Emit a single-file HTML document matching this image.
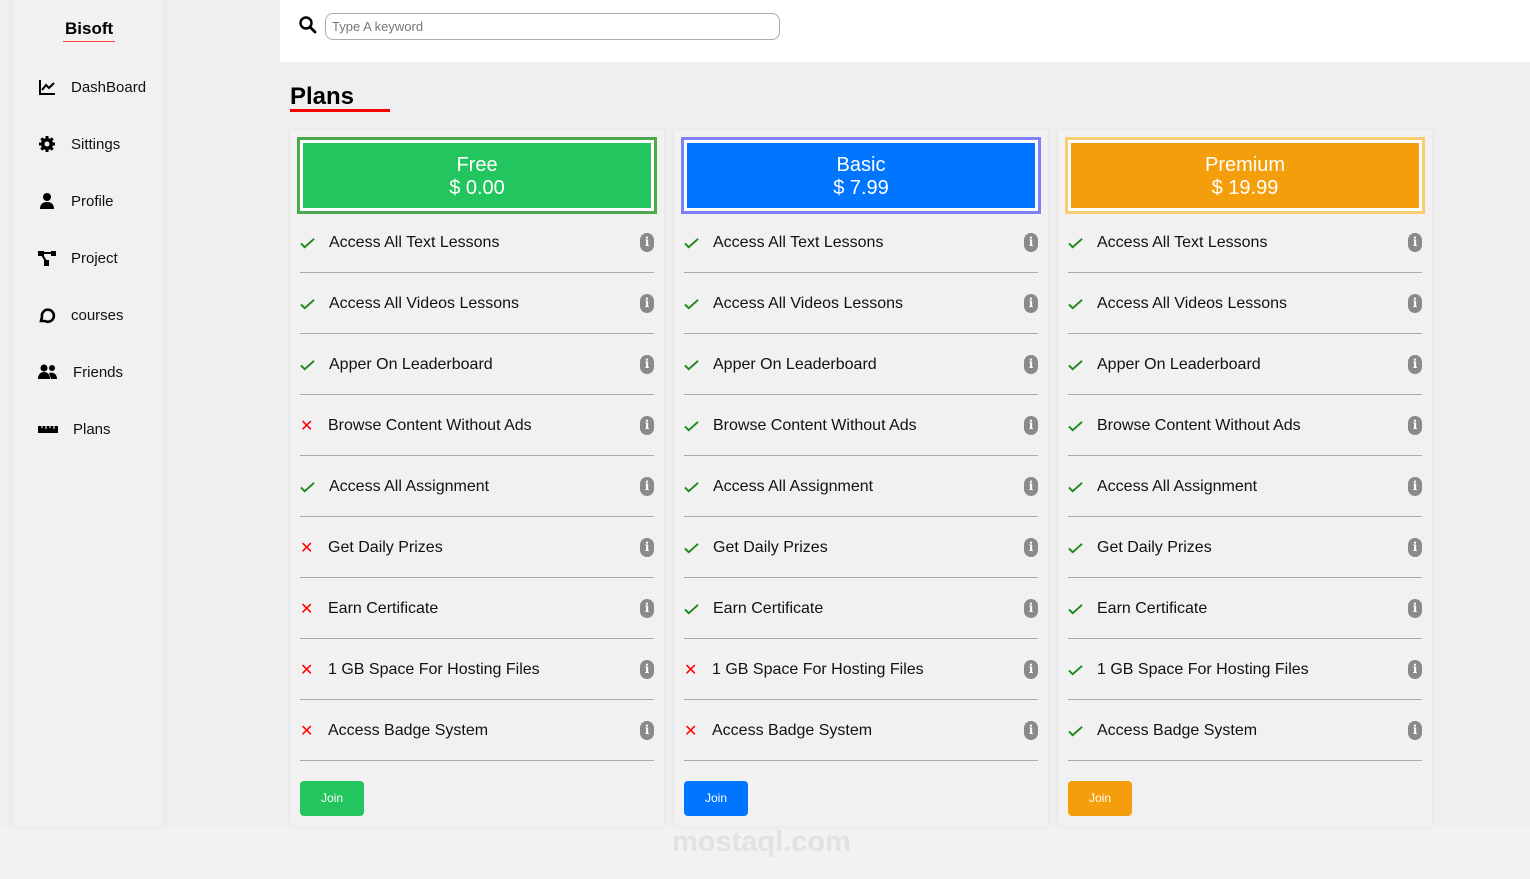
<!DOCTYPE html>
<html><head><meta charset="utf-8"><style>
*{box-sizing:border-box;margin:0;padding:0}
body{width:1530px;height:879px;background:#efefef;font-family:"Liberation Sans",Arial,sans-serif;position:relative;overflow:hidden}
.bottom{position:absolute;left:0;top:826px;width:1530px;height:53px;background:#f2f2f2}
.side{position:absolute;left:13px;top:0;width:150px;height:826px;background:#f1f1f1;box-shadow:0 0 8px rgba(0,0,0,.05)}
.logo{position:absolute;left:52px;top:19px;font-weight:bold;font-size:17px;color:#000}
.logo:after{content:"";position:absolute;left:-2px;right:-2px;top:22px;height:1px;background:#f44}
.nav{position:absolute;left:25px;font-size:15px;color:#111;display:flex;align-items:center}
.nav svg{width:18px;height:18px;margin-right:15px}
.top{position:absolute;left:280px;top:0;width:1250px;height:62px;background:#fff}
.search{position:absolute;left:325px;top:13px;width:455px;height:27px;border:1px solid #aaa;border-radius:8px;font-size:13px;color:#777;padding:5px 6px}
h1{position:absolute;left:290px;top:83px;font-size:24px;font-weight:bold}
.ul{position:absolute;left:290px;top:109px;width:100px;height:3px;background:#f00}
.card{position:absolute;top:130px;width:374px;height:696px;background:#f1f1f1;box-shadow:0 0 6px rgba(0,0,0,.06)}
.hd{position:absolute;left:7px;top:7px;width:360px;height:77px;border:3px solid;padding:3px;background:#fff}
.hd div{height:100%;color:#fff;text-align:center;font-size:20px;line-height:23px;padding-top:11px}
.rows{position:absolute;left:10px;top:82px;width:354px}
.row{height:61px;border-bottom:1px solid #aaa;display:flex;align-items:center;font-size:16px;color:#111;position:relative;padding-top:2px}
.ic{width:29px;display:flex;align-items:center}
.no{color:#f00;font-size:16px;width:28px}
.i{position:absolute;right:0;top:21px;width:14px;height:19px;border-radius:7px;background:#8a8a8a;color:#fff;font-size:12px;font-weight:bold;text-align:center;line-height:19px;font-family:"DejaVu Serif",serif}
.btn{position:absolute;left:10px;top:651px;width:64px;height:35px;border-radius:4px;color:#fff;font-size:12px;text-align:center;line-height:35px}
.wm{position:absolute;left:672px;top:826px;font-size:29px;font-weight:bold;color:#e2e2e2}
</style></head><body>
<svg width="0" height="0" style="position:absolute"><defs><symbol id="ck" viewBox="0 0 16 12"><path d="M1 6.5l4 4L15 1.5" stroke="#198a19" stroke-width="2" fill="none"/></symbol></defs></svg>
<div class="bottom"></div>
<div class="side">
<div class="logo">Bisoft</div>
<div class="nav" style="top:78px"><svg viewBox="0 0 18 18"><path d="M2 2v14h15" stroke="#000" stroke-width="2" fill="none"/><path d="M4 12l4-5 3 3 5-5" stroke="#000" stroke-width="2" fill="none"/></svg>DashBoard</div>
<div class="nav" style="top:135px"><svg viewBox="0 0 18 18"><circle cx="9" cy="9" r="6" fill="#000"/><path d="M9 1v16M1 9h16M3.3 3.3l11.4 11.4M14.7 3.3L3.3 14.7" stroke="#000" stroke-width="3"/><circle cx="9" cy="9" r="2.5" fill="#f1f1f1"/></svg>Sittings</div>
<div class="nav" style="top:192px"><svg viewBox="0 0 18 18"><circle cx="9" cy="5" r="4" fill="#000"/><path d="M2 17c0-5 3-7 7-7s7 2 7 7z" fill="#000"/></svg>Profile</div>
<div class="nav" style="top:249px"><svg viewBox="0 0 18 18"><rect x="0" y="2" width="6" height="5" fill="#000"/><rect x="13" y="2" width="5" height="5" fill="#000"/><rect x="6" y="11" width="5" height="6" fill="#000"/><path d="M3 4h12M3 4l6 10" stroke="#000" stroke-width="2"/></svg>Project</div>
<div class="nav" style="top:306px"><svg viewBox="0 0 18 18"><path d="M3 15l1-4a6 6 0 1 1 3 4z" fill="none" stroke="#000" stroke-width="2.6"/></svg>courses</div>
<div class="nav" style="top:363px"><svg viewBox="0 0 20 18" style="width:20px"><circle cx="6" cy="5" r="3.5" fill="#000"/><circle cx="14" cy="5" r="3" fill="#000"/><path d="M0 16c0-5 3-7 6-7s6 2 6 7z M11 10c3-1 8 0 8 6h-6z" fill="#000"/></svg>Friends</div>
<div class="nav" style="top:420px"><svg viewBox="0 0 20 18" style="width:20px"><rect x="0" y="6" width="20" height="7" fill="#000"/><path d="M4 6v2M8 6v3M12 6v2M16 6v3" stroke="#f1f1f1" stroke-width="1.2"/></svg>Plans</div>
</div>
<div class="top"></div>
<svg style="position:absolute;left:299px;top:16px" width="18" height="18" viewBox="0 0 18 18"><circle cx="7" cy="7" r="5.5" fill="none" stroke="#000" stroke-width="2.4"/><path d="M11 11l5 5" stroke="#000" stroke-width="2.8" stroke-linecap="round"/></svg>
<div class="search">Type A keyword</div>
<h1>Plans</h1><div class="ul"></div>

<div class="card" style="left:290px">
<div class="hd" style="border-color:#4ea84f"><div style="background:#22c55e">Free<br>$ 0.00</div></div>
<div class="rows">
<div class="row"><span class="ic"><svg width="15" height="12"><use href="#ck"/></svg></span>Access All Text Lessons<span class="i">i</span></div>
<div class="row"><span class="ic"><svg width="15" height="12"><use href="#ck"/></svg></span>Access All Videos Lessons<span class="i">i</span></div>
<div class="row"><span class="ic"><svg width="15" height="12"><use href="#ck"/></svg></span>Apper On Leaderboard<span class="i">i</span></div>
<div class="row"><span class="ic no">✕</span>Browse Content Without Ads<span class="i">i</span></div>
<div class="row"><span class="ic"><svg width="15" height="12"><use href="#ck"/></svg></span>Access All Assignment<span class="i">i</span></div>
<div class="row"><span class="ic no">✕</span>Get Daily Prizes<span class="i">i</span></div>
<div class="row"><span class="ic no">✕</span>Earn Certificate<span class="i">i</span></div>
<div class="row"><span class="ic no">✕</span>1 GB Space For Hosting Files<span class="i">i</span></div>
<div class="row"><span class="ic no">✕</span>Access Badge System<span class="i">i</span></div>
</div>
<div class="btn" style="background:#22c55e">Join</div>
</div>

<div class="card" style="left:674px">
<div class="hd" style="border-color:#7f7ff7"><div style="background:#0075ff">Basic<br>$ 7.99</div></div>
<div class="rows">
<div class="row"><span class="ic"><svg width="15" height="12"><use href="#ck"/></svg></span>Access All Text Lessons<span class="i">i</span></div>
<div class="row"><span class="ic"><svg width="15" height="12"><use href="#ck"/></svg></span>Access All Videos Lessons<span class="i">i</span></div>
<div class="row"><span class="ic"><svg width="15" height="12"><use href="#ck"/></svg></span>Apper On Leaderboard<span class="i">i</span></div>
<div class="row"><span class="ic"><svg width="15" height="12"><use href="#ck"/></svg></span>Browse Content Without Ads<span class="i">i</span></div>
<div class="row"><span class="ic"><svg width="15" height="12"><use href="#ck"/></svg></span>Access All Assignment<span class="i">i</span></div>
<div class="row"><span class="ic"><svg width="15" height="12"><use href="#ck"/></svg></span>Get Daily Prizes<span class="i">i</span></div>
<div class="row"><span class="ic"><svg width="15" height="12"><use href="#ck"/></svg></span>Earn Certificate<span class="i">i</span></div>
<div class="row"><span class="ic no">✕</span>1 GB Space For Hosting Files<span class="i">i</span></div>
<div class="row"><span class="ic no">✕</span>Access Badge System<span class="i">i</span></div>
</div>
<div class="btn" style="background:#0075ff">Join</div>
</div>

<div class="card" style="left:1058px">
<div class="hd" style="border-color:#f9cd72"><div style="background:#f59e0b">Premium<br>$ 19.99</div></div>
<div class="rows">
<div class="row"><span class="ic"><svg width="15" height="12"><use href="#ck"/></svg></span>Access All Text Lessons<span class="i">i</span></div>
<div class="row"><span class="ic"><svg width="15" height="12"><use href="#ck"/></svg></span>Access All Videos Lessons<span class="i">i</span></div>
<div class="row"><span class="ic"><svg width="15" height="12"><use href="#ck"/></svg></span>Apper On Leaderboard<span class="i">i</span></div>
<div class="row"><span class="ic"><svg width="15" height="12"><use href="#ck"/></svg></span>Browse Content Without Ads<span class="i">i</span></div>
<div class="row"><span class="ic"><svg width="15" height="12"><use href="#ck"/></svg></span>Access All Assignment<span class="i">i</span></div>
<div class="row"><span class="ic"><svg width="15" height="12"><use href="#ck"/></svg></span>Get Daily Prizes<span class="i">i</span></div>
<div class="row"><span class="ic"><svg width="15" height="12"><use href="#ck"/></svg></span>Earn Certificate<span class="i">i</span></div>
<div class="row"><span class="ic"><svg width="15" height="12"><use href="#ck"/></svg></span>1 GB Space For Hosting Files<span class="i">i</span></div>
<div class="row"><span class="ic"><svg width="15" height="12"><use href="#ck"/></svg></span>Access Badge System<span class="i">i</span></div>
</div>
<div class="btn" style="background:#f59e0b">Join</div>
</div>
<div class="wm">mostaql.com</div>
</body></html>
